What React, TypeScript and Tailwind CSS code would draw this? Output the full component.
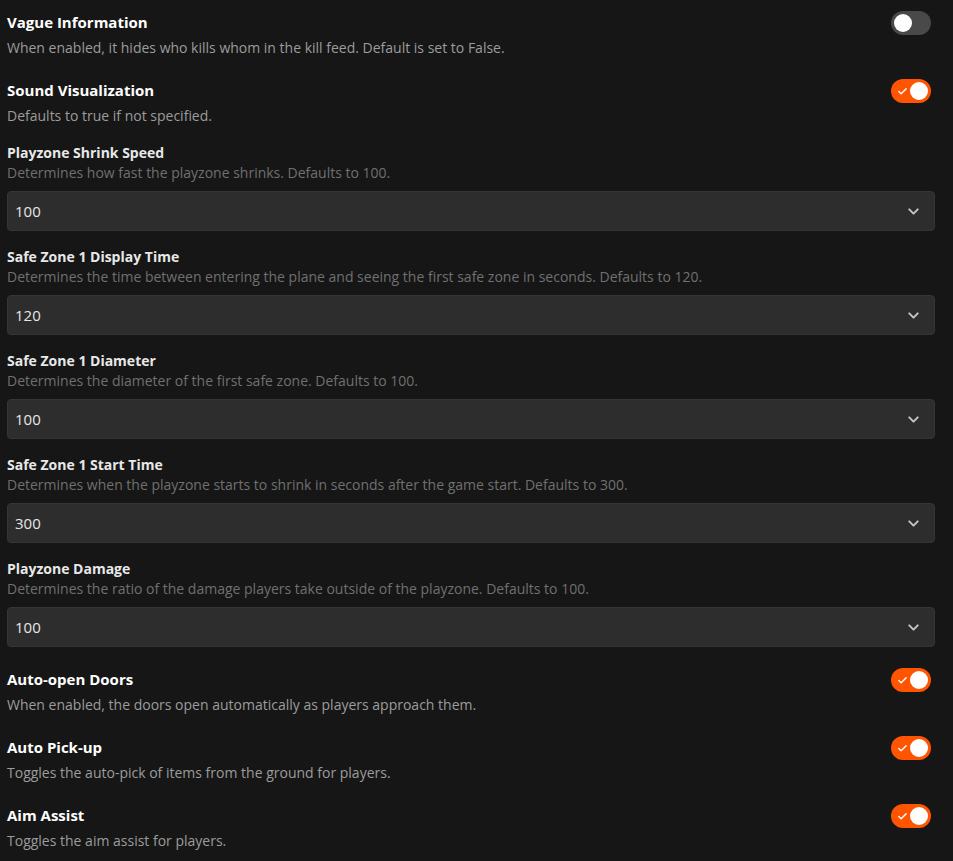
import { ChevronDown, Check } from "lucide-react";

type ToggleSetting = { title: string; desc: string; on: boolean };
type SelectSetting = { title: string; desc: string; value: string };

const topToggles: ToggleSetting[] = [
  { title: "Vague Information", desc: "When enabled, it hides who kills whom in the kill feed. Default is set to False.", on: false },
  { title: "Sound Visualization", desc: "Defaults to true if not specified.", on: true },
];

const selects: SelectSetting[] = [
  { title: "Playzone Shrink Speed", desc: "Determines how fast the playzone shrinks. Defaults to 100.", value: "100" },
  { title: "Safe Zone 1 Display Time", desc: "Determines the time between entering the plane and seeing the first safe zone in seconds. Defaults to 120.", value: "120" },
  { title: "Safe Zone 1 Diameter", desc: "Determines the diameter of the first safe zone. Defaults to 100.", value: "100" },
  { title: "Safe Zone 1 Start Time", desc: "Determines when the playzone starts to shrink in seconds after the game start. Defaults to 300.", value: "300" },
  { title: "Playzone Damage", desc: "Determines the ratio of the damage players take outside of the playzone. Defaults to 100.", value: "100" },
];

const bottomToggles: ToggleSetting[] = [
  { title: "Auto-open Doors", desc: "When enabled, the doors open automatically as players approach them.", on: true },
  { title: "Auto Pick-up", desc: "Toggles the auto-pick of items from the ground for players.", on: true },
  { title: "Aim Assist", desc: "Toggles the aim assist for players.", on: true },
];

function Toggle({ on }: { on: boolean }) {
  return (
    <div
      className={`relative w-10 h-6 rounded-full shrink-0 flex items-center ${
        on ? "bg-[#ff5500] justify-end" : "bg-[#494949] justify-start"
      }`}
    >
      {on && <Check className="absolute left-[6px] top-[7px] w-[11px] h-[11px] text-white" strokeWidth={3} />}
      <div className={`w-[18px] h-[18px] rounded-full bg-white ${on ? "mr-[3px]" : "ml-[3px]"}`} />
    </div>
  );
}

function ToggleRow({ s }: { s: ToggleSetting }) {
  return (
    <div className="flex justify-between items-start pt-[10px] pb-2">
      <div className="flex flex-col">
        <div className="h-6 leading-6 text-[15px] font-bold text-white">{s.title}</div>
        <div className="mt-[2px] h-6 leading-6 text-[14px] text-[#9c9c9c]">{s.desc}</div>
      </div>
      <div className="mr-1 mt-[1px]">
        <Toggle on={s.on} />
      </div>
    </div>
  );
}

function SelectRow({ s }: { s: SelectSetting }) {
  return (
    <div className="flex flex-col">
      <div className="h-5 leading-5 text-[14px] font-bold text-[#e8e8e8]">{s.title}</div>
      <div className="h-5 leading-5 text-[14px] text-[#707070]">{s.desc}</div>
      <div className="mt-2 h-10 rounded bg-[#2d2d2d] border border-[#353535] flex items-center justify-between pl-[7px] pr-[12px]">
        <span className="text-[15px] text-[#e6e6e6]">{s.value}</span>
        <ChevronDown className="w-[17px] h-[17px] text-[#c4c4c4]" strokeWidth={2.75} />
      </div>
    </div>
  );
}

export default function App() {
  return (
    <div
      className="min-h-screen bg-[#161616] pl-[7px] pr-[18px]"
      style={{ fontFamily: '"Open Sans", "Noto Sans", sans-serif' }}
    >
      {topToggles.map((s) => (
        <ToggleRow key={s.title} s={s} />
      ))}
      <div className="flex flex-col gap-4 pt-[7px] pb-[10px]">
        {selects.map((s) => (
          <SelectRow key={s.title} s={s} />
        ))}
      </div>
      {bottomToggles.map((s) => (
        <ToggleRow key={s.title} s={s} />
      ))}
    </div>
  );
}
